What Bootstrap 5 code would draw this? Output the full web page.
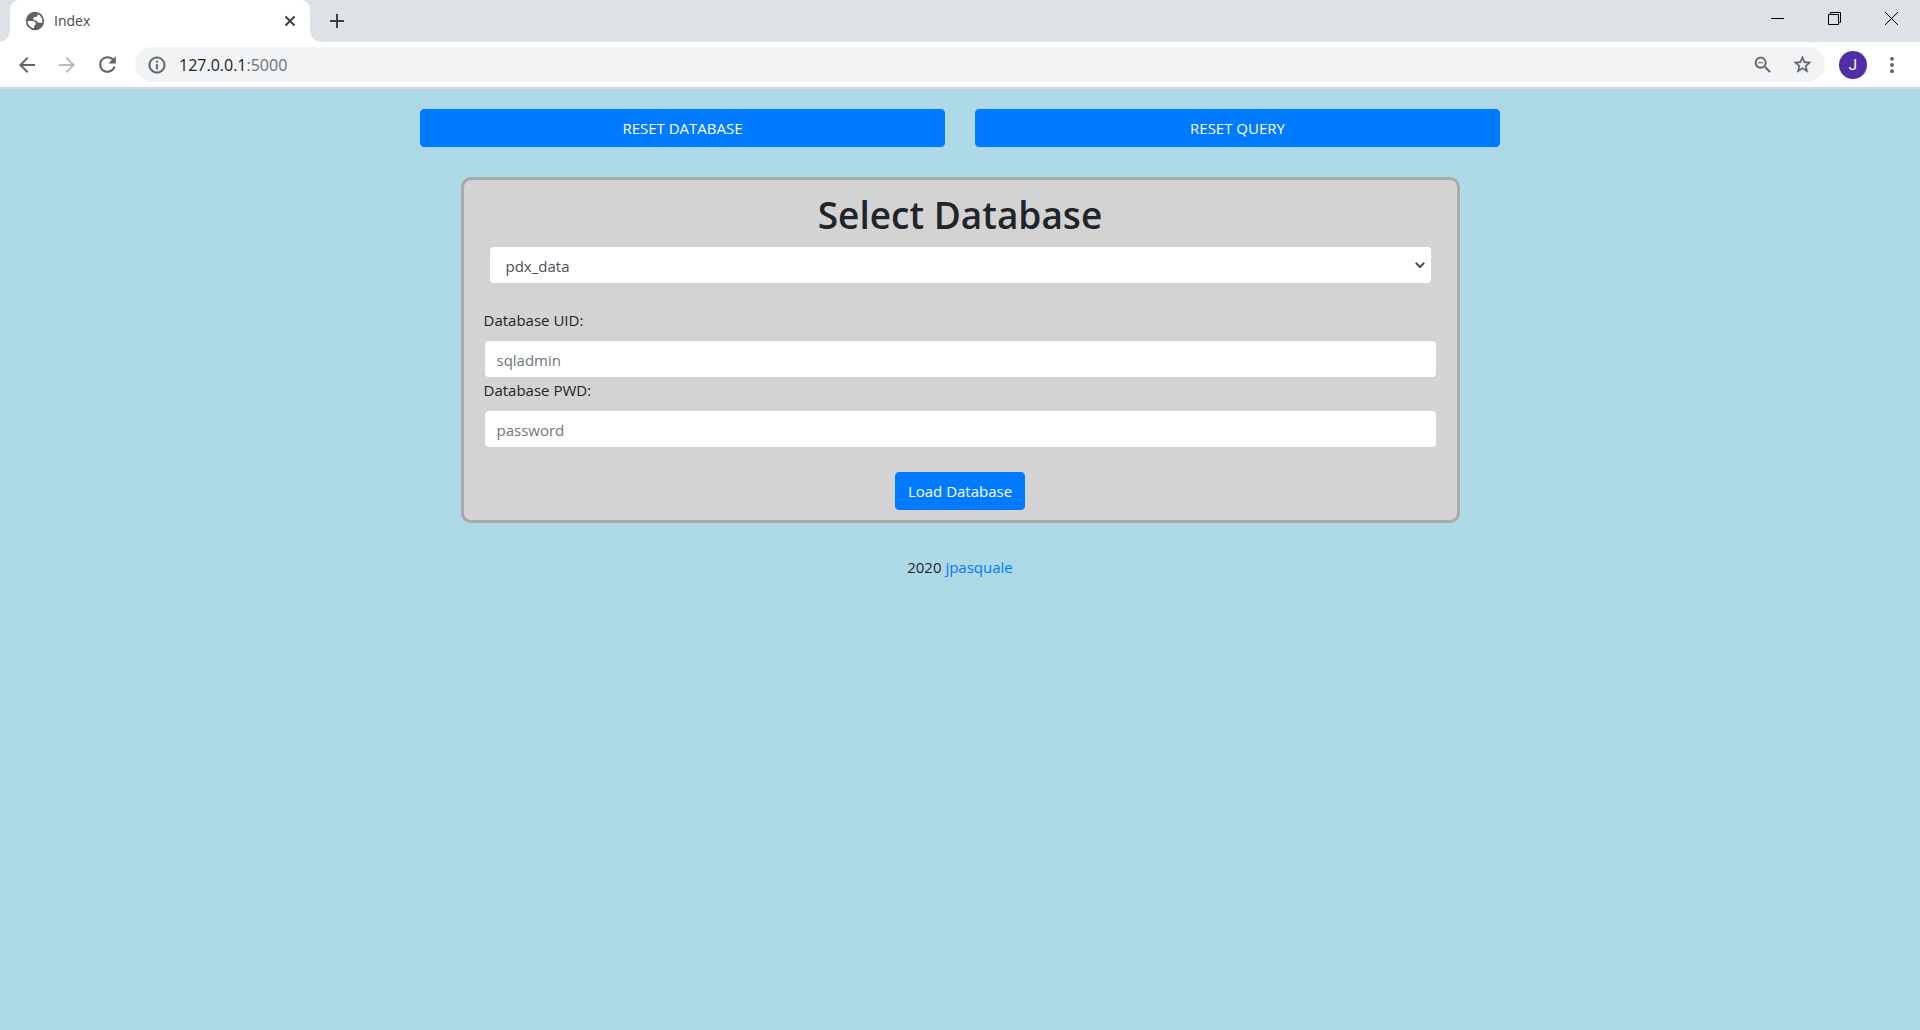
<!DOCTYPE html>
<html lang="en">
<head>
<meta charset="utf-8">
<meta name="viewport" content="width=device-width, initial-scale=1">
<title>Index</title>
<link href="https://cdn.jsdelivr.net/npm/bootstrap@5.3.0/dist/css/bootstrap.min.css" rel="stylesheet">
<style>
  body { background: lightblue; color: #212529; font-family: "Open Sans", sans-serif; font-size: 15px; line-height: 24px; }
  svg { display: block; flex: none; }
  .icon-btn { border: 0; background: none; padding: 0; color: #5f6368; display: flex; align-items: center; justify-content: center; flex: none; }

  /* browser window */
  .tabstrip { background: #dee1e6; height: 42px; padding-left: 10px; }
  .tab-item { position: relative; width: 300px; height: 42px; background: #fff; border-radius: 9px 9px 0 0; padding: 0 14px; font-size: 14px; color: #45494d; }
  .tab-item::before, .tab-item::after { content: ""; position: absolute; bottom: 0; width: 10px; height: 10px; }
  .tab-item::before { left: -10px; background: radial-gradient(circle at 0 0, transparent 9px, #fff 10px); }
  .tab-item::after { right: -10px; background: radial-gradient(circle at 100% 0, transparent 9px, #fff 10px); }
  .tab-item .icon-btn, .new-tab { color: #3c4043; }
  .new-tab { width: 54px; height: 42px; }
  .win-btn { width: 57px; height: 36px; color: #000; }
  .toolbar { background: #fff; height: 47px; border-bottom: 2px solid #d5d8da; padding: 0 16px 0 7px; }
  .nav-btn { width: 40px; height: 36px; }
  .omnibox { background: #f1f3f4; height: 35px; border-radius: 18px; margin: 0 14px 0 8px; padding: 0 12px; }
  .omnibox-actions { gap: 18px; }
  .address { font-size: 16px; color: #202124; text-decoration: none; }
  .address span { color: #6b7075; }
  .avatar { width: 28px; height: 28px; border-radius: 50%; background: #512da8; color: #fff; font-family: Roboto, sans-serif; font-size: 15px; margin-right: 13px; }

  /* page */
  .page-wrap { max-width: 1110px; padding-top: 20px; }
  .page-wrap .row { --bs-gutter-x: 30px; margin: 0; }
  .btn { --bs-btn-font-size: 15px; --bs-btn-line-height: 24px; --bs-btn-border-radius: 4px; }
  .btn-primary { --bs-btn-bg: #007bff; --bs-btn-border-color: #007bff; }
  .panel { width: 90%; background: lightgray; border: 3px solid darkgray; border-radius: 10px; padding: 12px 20px 10px; margin: 30px auto 32px; }
  .panel h1 { font-size: 37px; line-height: 46px; font-weight: 600; }
  .form-control, .form-select { height: 38px; padding-top: 7px; padding-bottom: 5px; border-color: #ced4da; border-radius: 4px; font-size: 15px; line-height: 24px; color: #495057; }
  .form-control::placeholder { color: #6c757d; }
  .select-box { padding: 0 5px; }
  .form-select { padding-left: 16px; background-position: right 6px center; background-size: 10px 10px; background-image: url("data:image/svg+xml,%3Csvg xmlns='http://www.w3.org/2000/svg' viewBox='0 0 10 10'%3E%3Cpath d='M.8 2.800l4.200 4.200 4.200-4.200' fill='none' stroke='%23495057' stroke-width='2'/%3E%3C/svg%3E"); }
  .page-foot a { color: #007bff; text-decoration: none; }
</style>
</head>
<body>
<header>
  <div class="tabstrip d-flex">
    <div class="tab-item d-flex align-items-center">
      <svg width="22" height="22" viewBox="0 0 24 24" fill="#5f6368" class="me-2"><circle cx="12" cy="12" r="10"/><path fill="#fff" d="M4 12h4.400c3.400 0 4.500 1.500 4.500 3 0 1.200-1.900 1.500-1.900 3v1.900C7 19.600 4 16 4 12z"/><path fill="#fff" d="M15 4.600c3 1.200 5 4 5 7.400-.1 1-.3 1.800-.6 2.500-1-.9-2.200-.5-3.400-.5-1.500 0-1.500-2-3-2.500-1.400-.4-3-.4-3-2 0-1.400 1.300-1.900 2.700-1.900 1.400 0 2.300-1.500 2.300-3z"/></svg>
      <span>Index</span>
      <button type="button" class="icon-btn ms-auto" aria-label="Close tab"><svg width="12" height="12" viewBox="0 0 12 12" stroke="currentColor" stroke-width="2"><path d="M1.500 1.500l9 9M10.500 1.500l-9 9"/></svg></button>
    </div>
    <button type="button" class="icon-btn new-tab" aria-label="New tab"><svg width="16" height="16" viewBox="0 0 16 16" stroke="currentColor" stroke-width="2"><path d="M8 1v14M1 8h14"/></svg></button>
    <div class="d-flex ms-auto">
      <button type="button" class="icon-btn win-btn" aria-label="Minimize"><svg width="13" height="13" viewBox="0 0 13 13"><path d="M0 6h13v1H0z"/></svg></button>
      <button type="button" class="icon-btn win-btn" aria-label="Restore"><svg width="13" height="13" viewBox="0 0 13 13" fill="none" stroke="currentColor"><path d="M.5 2.500h10v10H.5zM2.500 2.500v-2h10v10h-2"/></svg></button>
      <button type="button" class="icon-btn win-btn" aria-label="Close"><svg width="13" height="13" viewBox="0 0 13 13" stroke="currentColor"><path d="M0 0l13 13M13 0L0 13"/></svg></button>
    </div>
  </div>
  <div class="toolbar d-flex align-items-center">
    <button type="button" class="icon-btn nav-btn" aria-label="Back"><svg width="24" height="24" viewBox="0 0 24 24" fill="currentColor"><path d="M20 11H7.830l5.590-5.590L12 4l-8 8 8 8 1.410-1.410L7.830 13H20v-2z"/></svg></button>
    <button type="button" class="icon-btn nav-btn" aria-label="Forward"><svg width="24" height="24" viewBox="0 0 24 24" fill="#babcbe"><path d="M12 4l-1.410 1.410L16.170 11H4v2h12.170l-5.580 5.590L12 20l8-8z"/></svg></button>
    <button type="button" class="icon-btn nav-btn" aria-label="Reload"><svg width="25" height="25" viewBox="0 0 24 24" fill="currentColor"><path d="M17.650 6.350C16.200 4.900 14.210 4 12 4c-4.420 0-7.990 3.580-7.990 8s3.570 8 7.990 8c3.730 0 6.840-2.550 7.730-6h-2.080c-.82 2.330-3.040 4-5.650 4-3.310 0-6-2.690-6-6s2.690-6 6-6c1.660 0 3.140.69 4.220 1.780L13 11h7V4l-2.350 2.350z"/></svg></button>
    <div class="omnibox d-flex align-items-center flex-grow-1">
      <svg width="20" height="20" viewBox="0 0 24 24" fill="#5f6368" stroke="#5f6368" stroke-width=".4"><path d="M11 17h2v-6h-2v6zm1-15C6.480 2 2 6.480 2 12s4.480 10 10 10 10-4.480 10-10S17.520 2 12 2zm0 18c-4.410 0-8-3.590-8-8s3.590-8 8-8 8 3.590 8 8-3.590 8-8 8zM11 9h2V7h-2v2z"/></svg>
      <a class="address ms-2 ps-1" href="#">127.0.0.1<span>:5000</span></a>
      <div class="omnibox-actions d-flex align-items-center ms-auto">
        <button type="button" class="icon-btn" aria-label="Zoom"><svg width="22" height="22" viewBox="0 0 24 24" fill="currentColor"><path d="M15.500 14h-.79l-.28-.27C15.410 12.590 16 11.110 16 9.500 16 5.910 13.090 3 9.500 3S3 5.910 3 9.500 5.910 16 9.500 16c1.610 0 3.090-.59 4.230-1.570l.27.28v.79l5 4.990L20.490 19l-4.990-5zm-6 0C7.010 14 5 11.990 5 9.500S7.010 5 9.500 5 14 7.010 14 9.500 11.990 14 9.500 14zM6.500 9h6v1.200h-6z"/></svg></button>
        <button type="button" class="icon-btn" aria-label="Bookmark this page"><svg width="21" height="21" viewBox="0 0 24 24" fill="currentColor" stroke="currentColor" stroke-width=".4"><path d="M22 9.240l-7.190-.62L12 2 9.190 8.630 2 9.240l5.460 4.730L5.820 21 12 17.270 18.180 21l-1.630-7.030L22 9.240zM12 15.400l-3.760 2.270 1-4.280-3.320-2.880 4.380-.38L12 6.100l1.710 4.040 4.380.38-3.320 2.880 1 4.280L12 15.400z"/></svg></button>
      </div>
    </div>
    <button type="button" class="icon-btn avatar" aria-label="Profile">J</button>
    <button type="button" class="icon-btn" aria-label="Menu"><svg width="24" height="24" viewBox="0 0 24 24" fill="currentColor"><circle cx="12" cy="5.800" r="1.900"/><circle cx="12" cy="12" r="1.900"/><circle cx="12" cy="18.200" r="1.900"/></svg></button>
  </div>
</header>
<main class="page-wrap container-fluid px-0">
  <div class="row">
    <div class="col-6"><button type="button" class="btn btn-primary w-100">RESET DATABASE</button></div>
    <div class="col-6"><button type="button" class="btn btn-primary w-100">RESET QUERY</button></div>
  </div>
  <form class="panel">
    <h1 class="text-center mb-2">Select Database</h1>
    <div class="select-box mb-4">
      <select class="form-select" aria-label="Database"><option>pdx_data</option></select>
    </div>
    <label class="d-block mb-2" for="uid">Database UID:</label>
    <input class="form-control" id="uid" type="text" placeholder="sqladmin">
    <label class="d-block mb-2" for="pwd">Database PWD:</label>
    <input class="form-control" id="pwd" type="password" placeholder="password">
    <div class="mt-4"><button type="button" class="btn btn-primary d-block mx-auto">Load Database</button></div>
  </form>
  <footer class="page-foot text-center">2020 <a href="#">jpasquale</a></footer>
</main>
<script src="https://cdn.jsdelivr.net/npm/bootstrap@5.3.0/dist/js/bootstrap.bundle.min.js"></script>
</body>
</html>
